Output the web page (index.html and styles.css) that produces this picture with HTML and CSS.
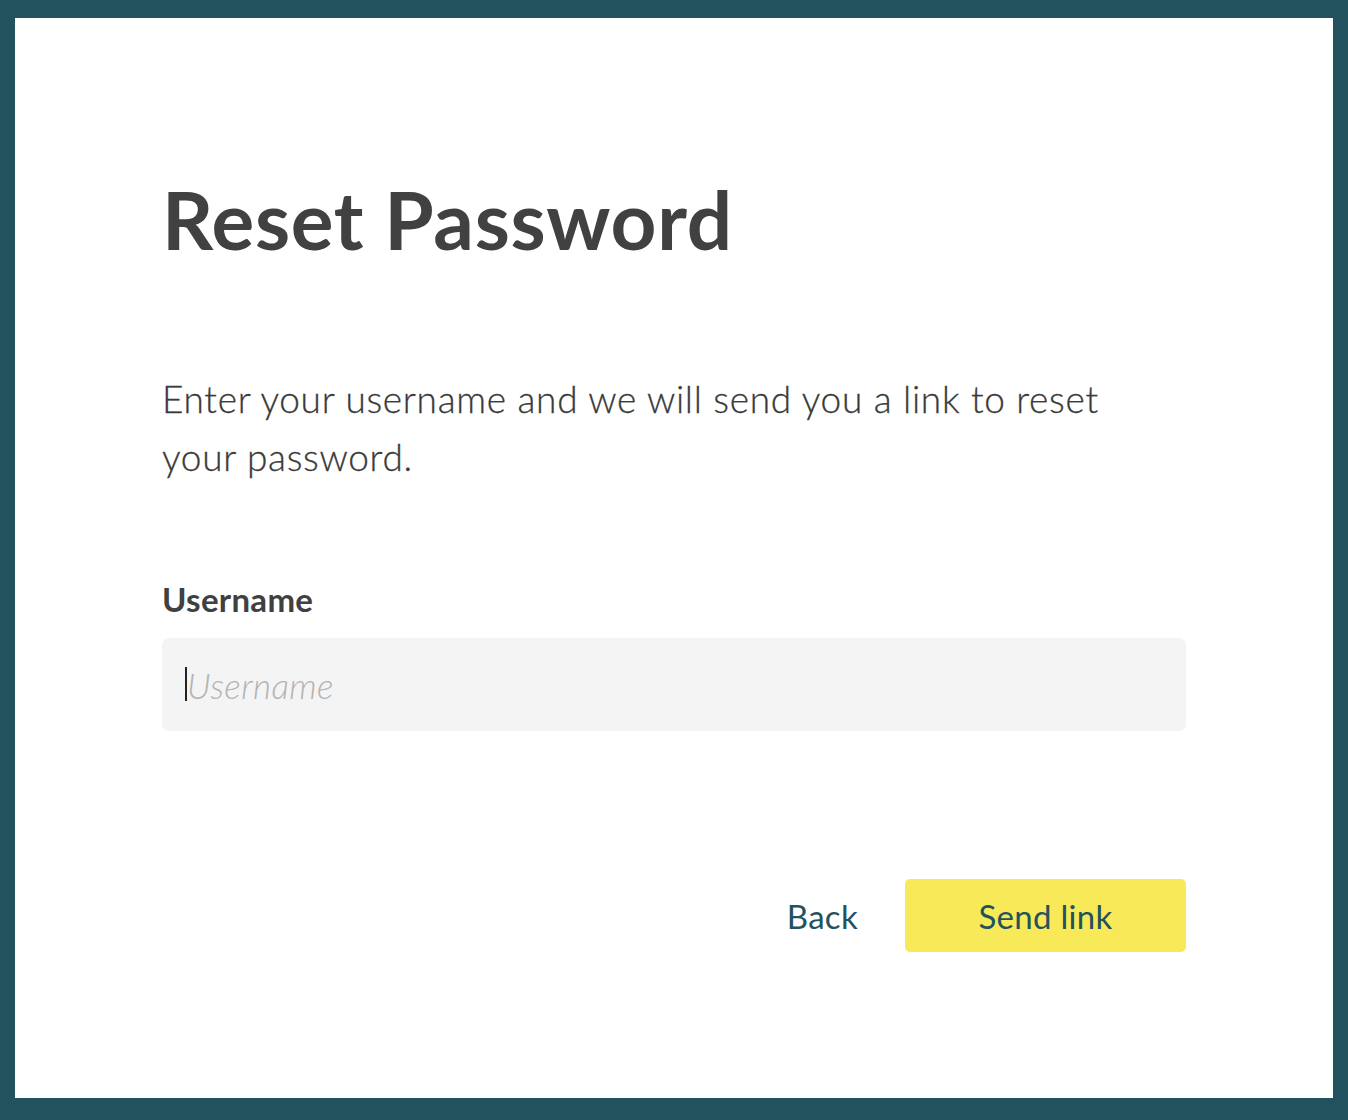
FILE: index.html
```html
<!DOCTYPE html>
<html lang="en">
<head>
<meta charset="utf-8">
<title>Reset Password</title>
<link rel="stylesheet" href="styles.css">
</head>
<body>
<main class="panel">
  <h1 class="title">Reset Password</h1>
  <p class="intro">Enter your username and we will send you a link to reset your password.</p>
  <form class="form">
    <label class="label" for="username">Username</label>
    <div class="field"><span class="caret"></span><input id="username" class="input" type="text" placeholder="Username"></div>
    <div class="actions">
      <a class="back" href="#">Back</a>
      <button class="send" type="button">Send link</button>
    </div>
  </form>
</main>
</body>
</html>
```

FILE: styles.css
```css
html, body {
  margin: 0;
  height: 100%;
}
body {
  background: #23525f;
  padding: 18px 15px 22px 15px;
  box-sizing: border-box;
  font-family: Lato, "Open Sans", sans-serif;
}
.panel {
  background: #ffffff;
  height: 100%;
  box-sizing: border-box;
  padding: 161px 147px 0 147px;
  color: #444444;
}
.title {
  margin: 0;
  font-size: 80px;
  font-weight: 700;
  line-height: 1;
  color: #414141;
  letter-spacing: 0.7px;
}
.intro {
  margin: 111px 0 0 0;
  font-size: 37px;
  font-weight: 300;
  line-height: 58px;
  color: #3a3a3a;
  max-width: 960px;
  letter-spacing: 0.7px;
  -webkit-text-stroke: 0.3px #3a3a3a;
}
.form {
  display: flex;
  flex-direction: column;
}
.label {
  margin-top: 95px;
  font-size: 33px;
  font-weight: 700;
  color: #404040;
  line-height: 36px;
  letter-spacing: 0.3px;
}
.field {
  position: relative;
  margin-top: 21px;
  height: 93px;
  background: #f4f4f4;
  border-radius: 7px;
}
.input {
  width: 100%;
  height: 100%;
  box-sizing: border-box;
  border: 0;
  background: transparent;
  padding: 0 0 0 25px;
  font-family: Lato, sans-serif;
  font-size: 35px;
  font-weight: 300;
  color: #444;
  outline: none;
  letter-spacing: 0.4px;
}
.input::placeholder {
  color: #b3b3b3;
  font-style: italic;
}
.caret {
  position: absolute;
  left: 23px;
  top: 29px;
  width: 2px;
  height: 34px;
  background: #222;
}
.actions {
  margin-top: 148px;
  display: flex;
  justify-content: flex-end;
  align-items: center;
  gap: 47px;
}
.back {
  font-size: 33px;
  color: #23525f;
  text-decoration: none;
  font-weight: 400;
  letter-spacing: 0.3px;
}
.send {
  width: 281px;
  height: 73px;
  background: #f7e957;
  border: 0;
  border-radius: 5px;
  font-family: Lato, sans-serif;
  font-size: 33px;
  color: #23525f;
  font-weight: 400;
  letter-spacing: 0.3px;
  cursor: pointer;
}
```
